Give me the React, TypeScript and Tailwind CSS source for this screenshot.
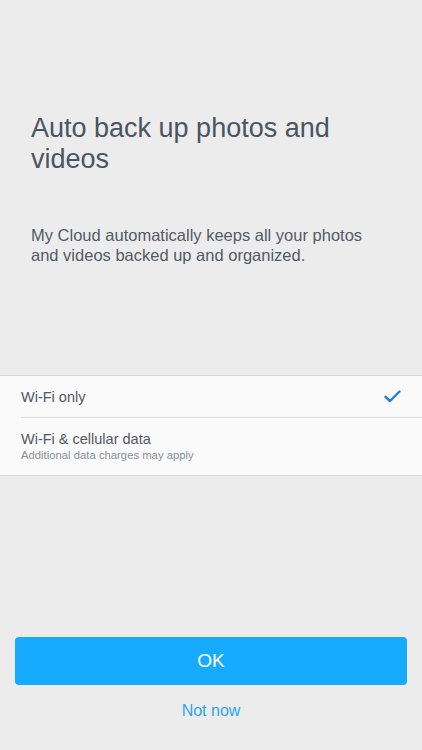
import React, { useState } from 'react';

type Option = {
  id: string;
  label: string;
  hint?: string;
};

const options: Option[] = [
  { id: 'wifi', label: 'Wi-Fi only' },
  { id: 'cellular', label: 'Wi-Fi & cellular data', hint: 'Additional data charges may apply' },
];

const Check = () => (
  <svg width="17" height="13" viewBox="0 0 17 13" fill="none">
    <path d="M1.5 6.8 L6 11 L15.5 1.5" stroke="#1f7fe0" strokeWidth="2.4" strokeLinecap="round" strokeLinejoin="round" />
  </svg>
);

export default function App() {
  const [selected, setSelected] = useState('wifi');

  return (
    <div
      className="w-[422px] h-[750px] bg-[#ececec] flex flex-col text-[#4a5461]"
      style={{ fontFamily: '"Liberation Sans", Arial, sans-serif' }}
    >
      {/* Intro copy */}
      <div className="pl-[31px] pr-[50px] pt-[113px]">
        <h1 className="text-[27px] leading-[31px] font-normal text-[#4a5563]">
          Auto back up photos and videos
        </h1>
        <p className="mt-[50px] text-[16.5px] leading-[20px] text-[#515b66]">
          My Cloud automatically keeps all your photos and videos backed up and organized.
        </p>
      </div>

      {/* Options */}
      <div className="mt-[110px] bg-[#fafafa] border-y border-[#d6d6d6]">
        {options.map((opt, i) => (
          <button
            key={opt.id}
            onClick={() => setSelected(opt.id)}
            className="w-full text-left pl-[21px] block"
          >
            <div
              className={`flex items-center justify-between pr-[21px] ${
                i > 0 ? 'border-t border-[#dcdcdc] h-[58px]' : 'h-[41px]'
              }`}
            >
              <div className="flex flex-col">
                <span className="text-[14.5px] leading-[18px] text-[#4f5964]">{opt.label}</span>
                {opt.hint && (
                  <span className="text-[11.3px] leading-[15px] text-[#8a8f95]">{opt.hint}</span>
                )}
              </div>
              {selected === opt.id && <Check />}
            </div>
          </button>
        ))}
      </div>

      {/* Actions */}
      <div className="mt-auto px-[15px] pb-[29px] flex flex-col items-center">
        <button className="w-full h-[48px] rounded-[4px] bg-[#17abff] text-white text-[19px]">
          OK
        </button>
        <button className="mt-[14px] h-[22px] text-[16px] text-[#2aa6f0]">Not now</button>
      </div>
    </div>
  );
}
